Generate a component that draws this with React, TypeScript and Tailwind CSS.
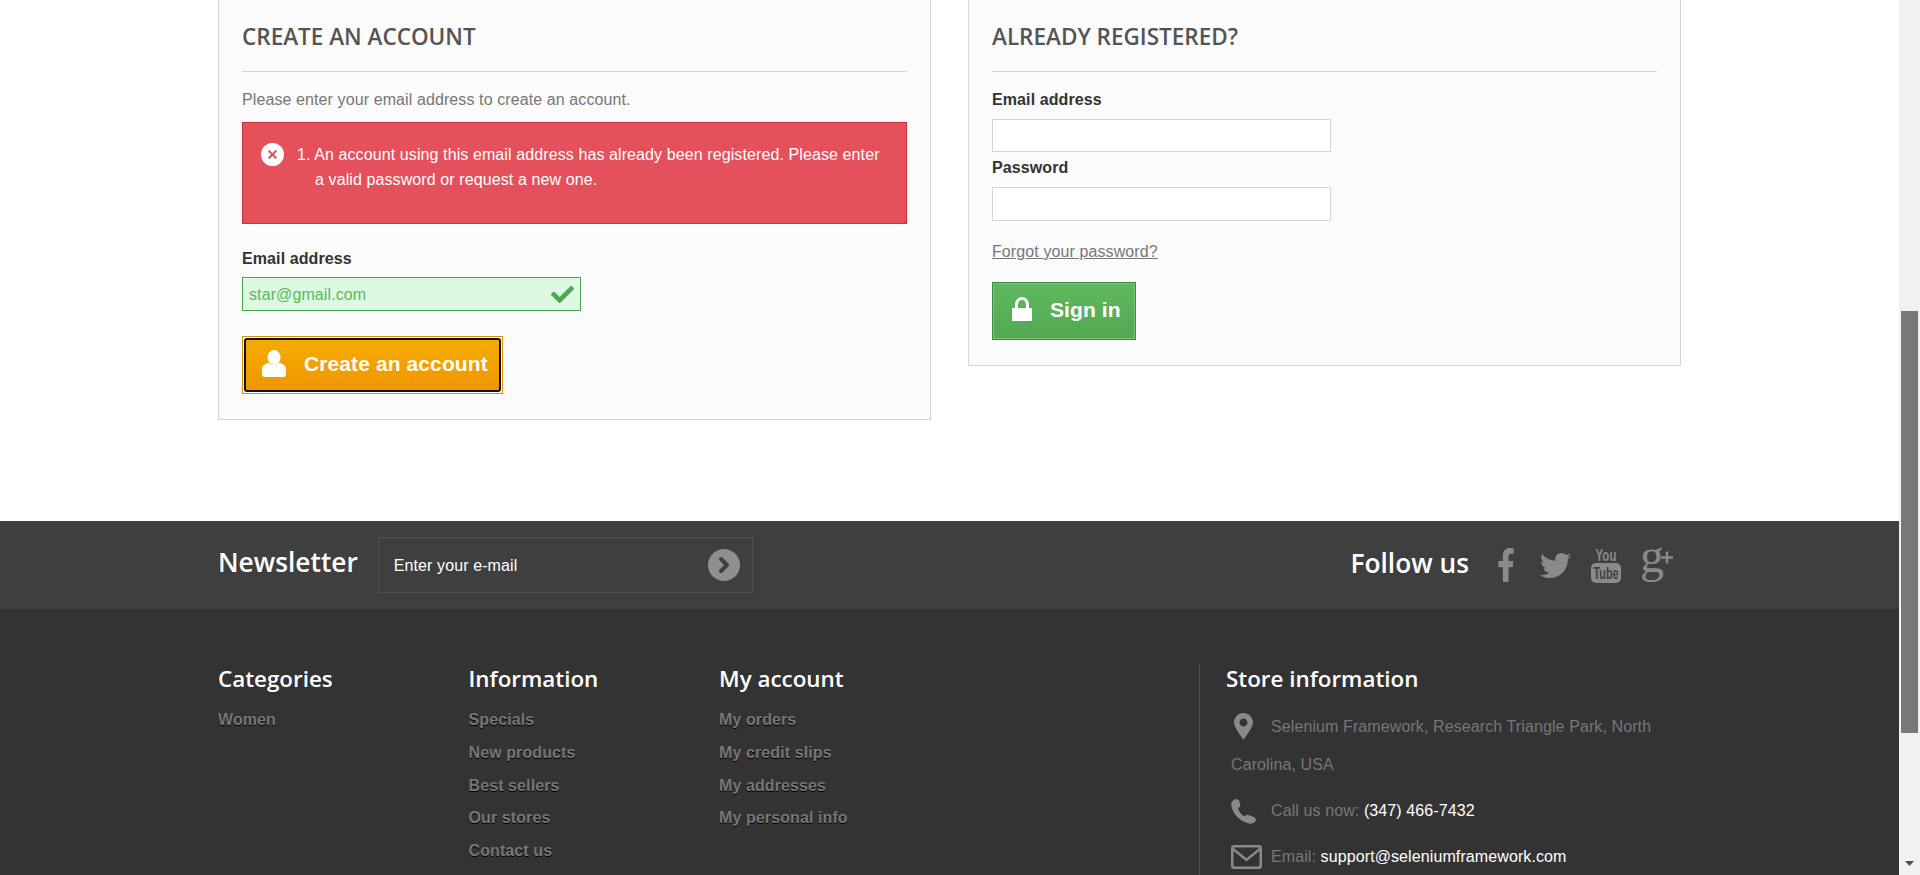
import React from 'react';
import { ChevronRight, X } from 'lucide-react';
import { FaCheck, FaFacebookF, FaTwitter } from 'react-icons/fa';

const heading = "font-['Open_Sans',sans-serif] tracking-normal";
const bodyFont = "font-['Liberation_Sans',Arial,sans-serif] tracking-[0.1px]";

const UserIcon = () => (
  <svg width="24" height="27" viewBox="0 0 24 27" fill="currentColor" className="shrink-0 -mt-[3px]">
    <ellipse cx="12" cy="7.5" rx="6.5" ry="7.5" />
    <path d="M0 24V20C0 15 4 13 7 13C9 15.5 15 15.5 17 13C20 13 24 15 24 20V24C24 26 23 27 21 27H3C1 27 0 26 0 24Z" />
  </svg>
);

const LockIcon = () => (
  <svg width="20" height="24" viewBox="0 0 20 24" fill="currentColor" className="shrink-0 -mt-[4px]">
    <path d="M1 11H3V7.500C3 3.500 6 0 10 0C14 0 17 3.500 17 7.500V11H19C19.600 11 20 11.400 20 12V23C20 23.600 19.600 24 19 24H1C.4 24 0 23.600 0 23V12C0 11.400 .4 11 1 11ZM6 11H14V7.500C14 5 12.200 3 10 3C7.800 3 6 5 6 7.500Z" fillRule="evenodd" />
  </svg>
);

const PinIcon = () => (
  <svg width="19" height="27" viewBox="0 0 19 27" fill="#8a8a8a" className="ml-[3px]">
    <path d="M9.500 0C14.700 0 19 4.200 19 9.500C19 14 12 23 9.500 27C7 23 0 14 0 9.500C0 4.200 4.300 0 9.500 0ZM9.500 5.500C7.300 5.500 5.500 7.300 5.500 9.500C5.500 11.700 7.300 13.500 9.500 13.500C11.700 13.500 13.500 11.700 13.500 9.500C13.500 7.300 11.700 5.500 9.500 5.500Z" fillRule="evenodd" />
  </svg>
);

const PhoneIcon = () => (
  <svg width="25" height="25" viewBox="0 0 25 25" fill="#8a8a8a">
    <path d="M5 0L8 1L9.500 7L7 9.500C7.500 12 10 15.500 13.500 17.500L16 15.500L24 18.500L25 21.500C24 24 21 25 18 24.500C9 23 1 14 .3 6C0 3 2 .8 5 0Z" />
  </svg>
);

const MailIcon = () => (
  <svg width="31" height="24" viewBox="0 0 31 24" fill="none" stroke="#8a8a8a" strokeWidth="2.500">
    <rect x="1.250" y="1.250" width="28.500" height="21.500" rx="2" />
    <path d="M1.500 3.500L15.500 15L29.500 3.500" />
  </svg>
);

const YoutubeLogo = () => (
  <svg width="30" height="35" viewBox="0 0 30 35" className="overflow-visible">
    <text x="15" y="13" textAnchor="middle" fontFamily="'Liberation Sans',Arial,sans-serif" fontSize="16" fontWeight="700" fill="#8a8a8a" textLength="21" lengthAdjust="spacingAndGlyphs">You</text>
    <rect x="0" y="15" width="30" height="20" rx="5" fill="#8a8a8a" />
    <text x="15" y="31" textAnchor="middle" fontFamily="'Liberation Sans',Arial,sans-serif" fontSize="16" fontWeight="700" fill="#3f3f3f" textLength="25" lengthAdjust="spacingAndGlyphs">Tube</text>
  </svg>
);

const GooglePlusLogo = () => (
  <svg width="32" height="35" viewBox="0 0 32 35" className="overflow-visible">
    <text x="-1" y="24" fontFamily="'Liberation Serif',serif" fontSize="48" fill="#8a8a8a">g</text>
    <path d="M20 9.500H32M26 3.500V15.500" stroke="#8a8a8a" strokeWidth="2.500" fill="none" />
  </svg>
);

const FooterColumn: React.FC<{ title: string; links: string[]; width: string }> = ({ title, links, width }) => (
  <div className={width}>
    <h4 className={`${heading} text-[22.4px] leading-[29px] font-semibold text-white mb-[11px]`}>{title}</h4>
    <ul className="flex flex-col">
      {links.map((link) => (
        <li key={link} className="h-[32.8px] text-[16px] leading-[32px] font-bold text-[#777777] [text-shadow:0_1px_#000]">
          {link}
        </li>
      ))}
    </ul>
  </div>
);

const Field: React.FC<{ label: string; height: string }> = ({ label, height }) => (
  <div>
    <label className="block text-[16px] leading-[21px] font-bold text-[#333333] mb-[9px]">{label}</label>
    <div className={`w-[339px] ${height} bg-white border border-[#d6d4d4]`} />
  </div>
);

export default function App() {
  return (
    <div className={`${bodyFont} flex h-[875px] w-full overflow-hidden bg-white`}>
      <div className="flex-1 min-w-0 flex flex-col">
        <main className="h-[521px] shrink-0 pl-[218px] pr-[218px] flex gap-[37px] items-start">
          {/* Create account */}
          <section className="w-[713px] h-[420px] bg-[#fbfbfb] border border-t-0 border-[#d6d4d4] px-[23px]">
            <h3 className={`${heading} text-[22.5px] leading-[32px] pt-[21px] pb-[18px] font-semibold text-[#555454] border-b border-[#d6d4d4] box-content`}>
              CREATE AN ACCOUNT
            </h3>
            <p className="text-[16px] leading-[21px] text-[#777777] mt-[17px]">Please enter your email address to create an account.</p>
            <div className="mt-[12px] h-[102px] bg-[#e4505b] border border-[#c9303c] pl-[18px] pt-[20px] flex text-white text-[16px] leading-[25px]">
              <div className="w-[23px] h-[23px] rounded-full bg-white flex items-center justify-center shrink-0">
                <X size={13} strokeWidth={4} className="text-[#e4505b]" />
              </div>
              <p className="ml-[13px] pl-[18px] -indent-[18px] -mt-[1px] w-[584px]">
                1. An account using this email address has already been registered. Please enter a valid password or request a new one.
              </p>
            </div>
            <label className="block text-[16px] leading-[21px] font-bold text-[#333333] mt-[24px] mb-[8px]">Email address</label>
            <div className="w-[339px] h-[34px] bg-[#ddf9e1] border border-[#46a74e] pl-[6px] pr-[6px] flex items-center justify-between">
              <span className="text-[16px] text-[#5cb85c] mt-[1px]">star@gmail.com</span>
              <FaCheck size={23} className="text-[#4fa655]" />
            </div>
            <button className="mt-[25px] block w-[261px] h-[58px] border border-[#d68f00] bg-white p-[1px]">
              <span className="flex items-center w-full h-full rounded-[3px] border-2 border-[#111111] bg-gradient-to-b from-[#f5ab00] to-[#f09600] text-white text-[21px] font-bold pl-[16px]">
                <UserIcon />
                <span className="ml-[18px] pb-[2px]">Create an account</span>
              </span>
            </button>
          </section>

          {/* Sign in */}
          <section className="w-[713px] h-[366px] bg-[#fbfbfb] border border-t-0 border-[#d6d4d4] px-[23px]">
            <h3 className={`${heading} text-[22.5px] leading-[32px] pt-[21px] pb-[18px] font-semibold text-[#555454] border-b border-[#d6d4d4] box-content`}>
              ALREADY REGISTERED?
            </h3>
            <div className="mt-[17px] flex flex-col gap-[5px]">
              <Field label="Email address" height="h-[33px]" />
              <Field label="Password" height="h-[34px]" />
            </div>
            <a className="block mt-[20px] text-[16px] leading-[21px] text-[#777777] underline">Forgot your password?</a>
            <button className="mt-[20px] flex items-center w-[144px] h-[58px] border border-[#3a8a3f] bg-gradient-to-b from-[#5fb95f] to-[#52a852] text-white text-[21px] font-bold pl-[19px] shadow-[inset_0_0_0_1px_#74c974]">
              <LockIcon />
              <span className="ml-[18px] pb-[2px]">Sign in</span>
            </button>
          </section>
        </main>

        <footer className="flex-1 min-h-0 bg-[#333333] flex flex-col">
          {/* Newsletter bar */}
          <div className="h-[88px] shrink-0 bg-[#3f3f3f] pl-[218px] pr-[218px] flex items-center justify-between">
            <div className="flex items-center">
              <span className={`${heading} text-[26.3px] font-semibold text-white mr-[20px] -mt-[4px]`}>Newsletter</span>
              <div className="w-[375px] h-[56px] border border-[#515151] pl-[15px] pr-[12px] flex items-center justify-between">
                <span className="text-[16px] text-white mt-[1px]">Enter your e-mail</span>
                <div className="w-[32px] h-[32px] rounded-full bg-[#908f8f] flex items-center justify-center">
                  <ChevronRight size={24} strokeWidth={4} className="text-[#3f3f3f]" />
                </div>
              </div>
            </div>
            <div className="flex items-center mr-[8px]">
              <span className={`${heading} text-[26.3px] font-semibold text-white mr-[28px] -mt-[2px]`}>Follow us</span>
              <div className="flex items-center text-[#8a8a8a]">
                <FaFacebookF className="w-[18px] h-[34px]" preserveAspectRatio="none" />
                <FaTwitter className="w-[31px] h-[31px] ml-[25px]" />
                <span className="ml-[20px]"><YoutubeLogo /></span>
                <span className="ml-[20px]"><GooglePlusLogo /></span>
              </div>
            </div>
          </div>

          {/* Footer columns */}
          <div className="flex-1 min-h-0 pl-[218px] pr-[218px] pt-[55px] flex">
            <FooterColumn title="Categories" width="w-[250.5px]" links={['Women']} />
            <FooterColumn title="Information" width="w-[250.5px]" links={['Specials', 'New products', 'Best sellers', 'Our stores', 'Contact us']} />
            <FooterColumn title="My account" width="w-[480px]" links={['My orders', 'My credit slips', 'My addresses', 'My personal info']} />
            <div className="flex-1 border-l border-[#515151] pl-[26px]">
              <h4 className={`${heading} text-[22.4px] leading-[29px] font-semibold text-white mb-[15px]`}>Store information</h4>
              <div className="text-[16px] text-[#777777] pl-[5px]">
                <div className="flex items-center h-[38px]">
                  <span className="w-[40px] shrink-0 -mt-[2px]"><PinIcon /></span>
                  <span>Selenium Framework, Research Triangle Park, North</span>
                </div>
                <div className="h-[38px] leading-[38px]">Carolina, USA</div>
                <div className="flex items-center h-[46px] mt-[4px]">
                  <span className="w-[40px] shrink-0"><PhoneIcon /></span>
                  <span>Call us now: <span className="text-white">(347) 466-7432</span></span>
                </div>
                <div className="flex items-center h-[44px] mt-[1px]">
                  <span className="w-[40px] shrink-0"><MailIcon /></span>
                  <span>Email: <span className="text-white">support@seleniumframework.com</span></span>
                </div>
              </div>
            </div>
          </div>
        </footer>
      </div>

      {/* Browser scrollbar */}
      <div className="w-[21px] shrink-0 bg-[#f1f1f1] flex flex-col px-[2px]">
        <div className="h-[311px]" />
        <div className="h-[422px] bg-[#787878]" />
        <div className="flex-1" />
        <div className="h-[17px] mb-[3px] flex items-center justify-center">
          <svg width="9" height="5" viewBox="0 0 9 5" fill="#505050"><path d="M0 0H9L4.500 5Z" /></svg>
        </div>
      </div>
    </div>
  );
}
